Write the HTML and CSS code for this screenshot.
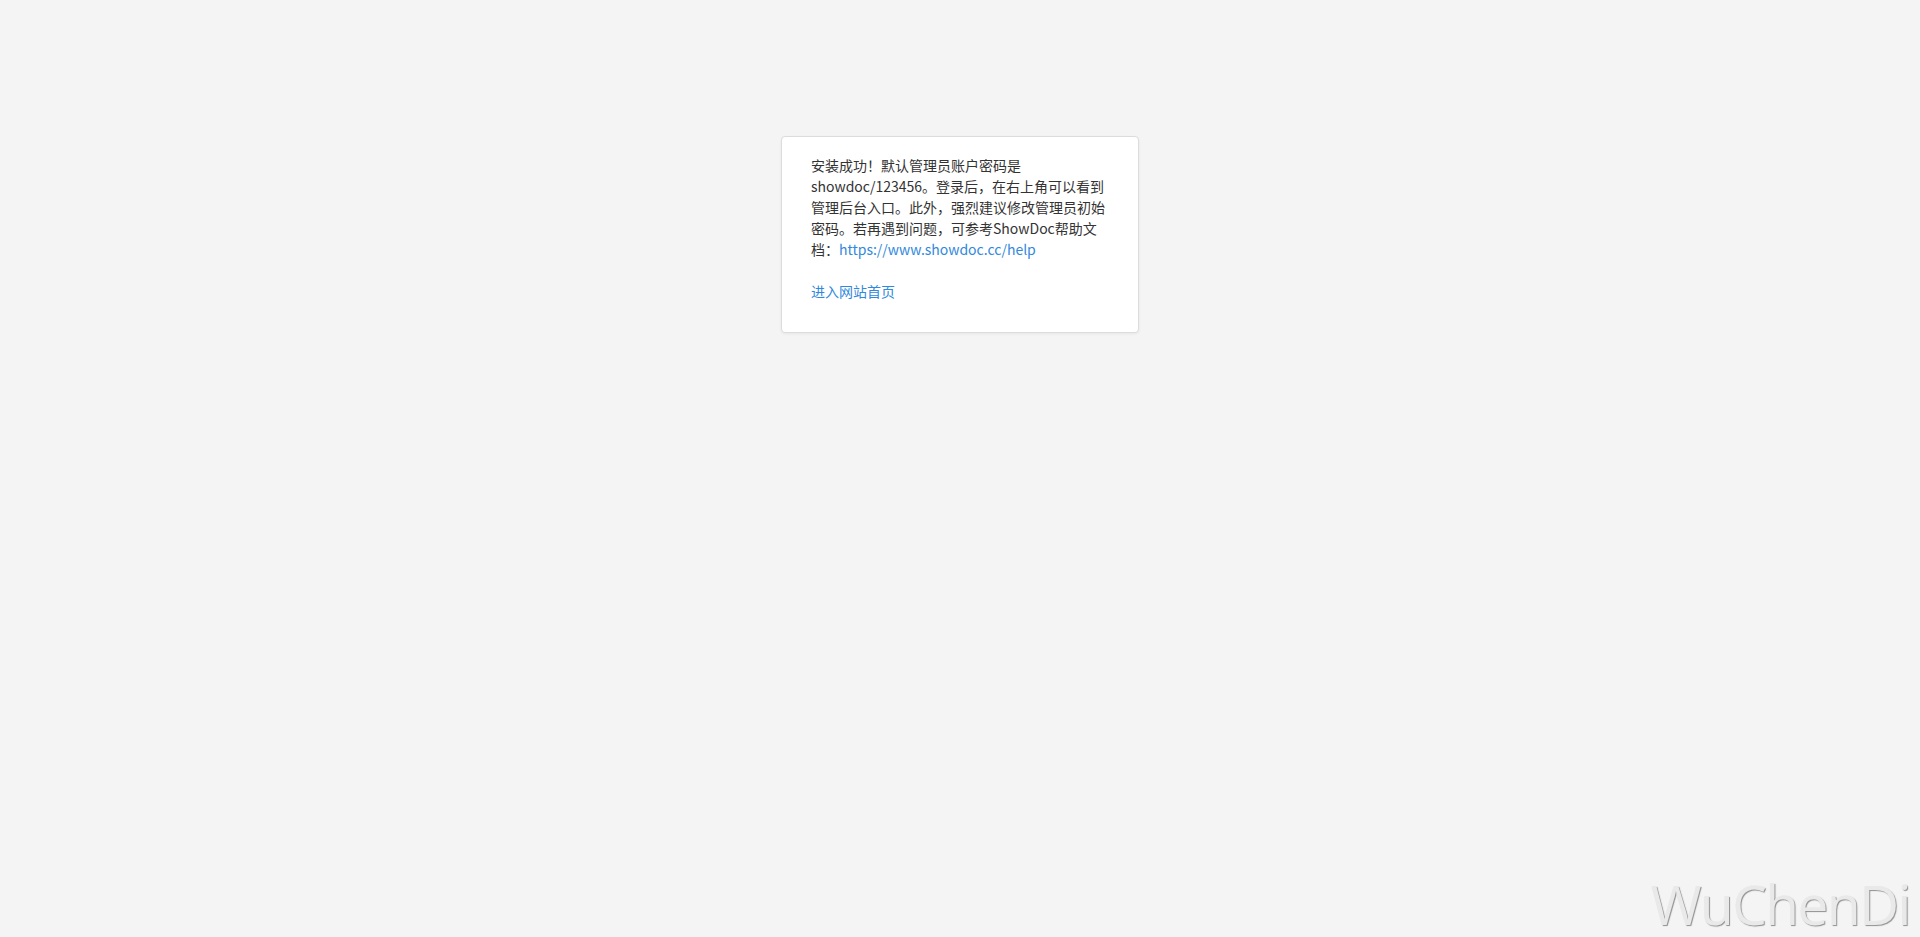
FILE: index.html
```html
<!DOCTYPE html>
<html lang="zh-CN">
<head>
<meta charset="utf-8">
<title>ShowDoc</title>
<link rel="stylesheet" href="styles.css">
</head>
<body>
<div class="page">
  <div class="card">
    <p class="msg">安装成功！默认管理员账户密码是showdoc/123456。登录后，在右上角可以看到管理后台入口。此外，强烈建议修改管理员初始密码。若再遇到问题，可参考ShowDoc帮助文档：<a href="#">https://www.showdoc.cc/help</a></p>
    <p class="msg home"><a href="#">进入网站首页</a></p>
  </div>
</div>
<div class="watermark">WuChenDi</div>
</body>
</html>
```

FILE: styles.css
```css
html, body {
  margin: 0;
  padding: 0;
  height: 100%;
}
body {
  background: #f4f4f4;
  font-family: "Noto Sans CJK SC", "Noto Sans", sans-serif;
  color: #333;
  font-size: 14px;
  overflow: hidden;
}
.page {
  display: flex;
  justify-content: center;
  padding-top: 136px;
}
.card {
  width: 298px;
  background: #fff;
  border: 1px solid #dcdcdc;
  border-radius: 4px;
  box-shadow: 0 1px 3px rgba(0,0,0,0.06);
  padding: 18px 29px 30px 29px;
}
.msg {
  margin: 0;
  line-height: 21px;
}
.home {
  margin-top: 21px;
}
a {
  color: #3189dd;
  text-decoration: none;
}
.watermark {
  position: absolute;
  right: 10px;
  bottom: 0;
  font-family: "Open Sans", "Noto Sans", sans-serif;
  font-size: 55px;
  line-height: 1.2;
  color: #e9e9e9;
  text-shadow: 1px 1px 1px #8f8f8f;
  letter-spacing: -1.5px;
}
```
